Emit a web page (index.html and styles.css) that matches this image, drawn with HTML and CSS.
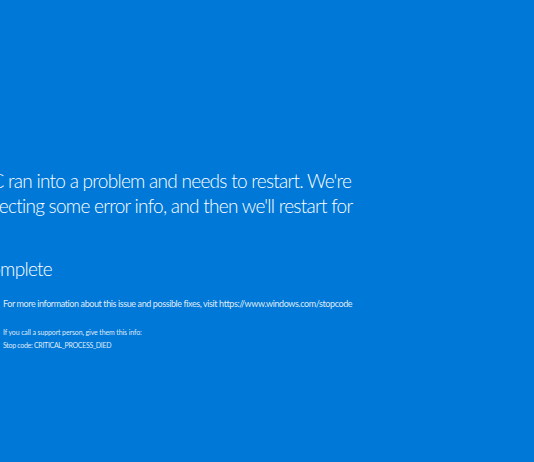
FILE: index.html
```html
<!DOCTYPE html>
<html lang="en">
<head>
<meta charset="utf-8">
<title>Stop code</title>
<link rel="stylesheet" href="styles.css">
</head>
<body>
<main class="screen">
  <p class="message">Your PC ran into a problem and needs to restart. We're just collecting some error info, and then we'll restart for you.</p>
  <p class="progress">20% complete</p>
  <section class="info">
    <div class="qr"></div>
    <div class="details">
      <p class="more">For more information about this issue and possible fixes, visit https://www.windows.com/stopcode</p>
      <p class="support">If you call a support person, give them this info:</p>
      <p class="code">Stop code: CRITICAL_PROCESS_DIED</p>
    </div>
  </section>
</main>
</body>
</html>
```
FILE: styles.css
```css
html, body {
  margin: 0;
  padding: 0;
  height: 100%;
}
body {
  background: #0078d7;
  color: #ffffff;
  font-family: Lato, "Open Sans", sans-serif;
  font-weight: 300;
  overflow: hidden;
}
p { margin: 0; }
.screen {
  margin-left: -57px;
  padding-top: 168px;
}
.message {
  width: 425px;
  font-size: 19px;
  line-height: 25px;
  letter-spacing: -0.72px;
}
.progress {
  margin-top: 13px;
  font-size: 19px;
  line-height: 25px;
  letter-spacing: -0.72px;
}
.info {
  display: flex;
  gap: 5px;
  margin-top: 16px;
}
.qr {
  width: 55px;
  height: 55px;
  background: #ffffff;
  flex: none;
}
.details {
  display: flex;
  flex-direction: column;
  white-space: nowrap;
  font-weight: 400;
  color: rgba(255, 255, 255, 0.88);
}
.more {
  font-size: 9px;
  line-height: 14px;
  letter-spacing: -0.4px;
}
.support {
  margin-top: 15px;
  font-size: 7px;
  line-height: 13px;
  letter-spacing: -0.12px;
}
.code {
  font-size: 7px;
  line-height: 13px;
  letter-spacing: -0.3px;
}
```
